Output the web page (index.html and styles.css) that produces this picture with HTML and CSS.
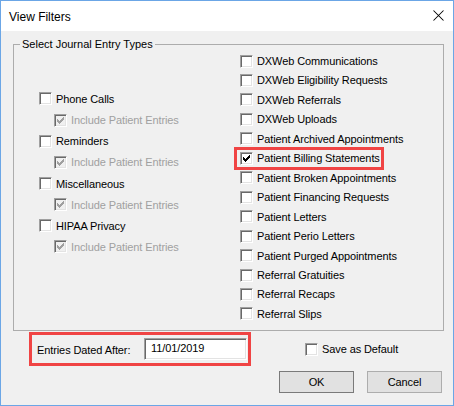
FILE: index.html
```html
<!DOCTYPE html>
<html>
<head>
<meta charset="utf-8">
<link rel="stylesheet" href="styles.css">
</head>
<body>
<div class="window">
  <div class="titlebar">
    <span class="title">View Filters</span>
    <svg class="close" width="11" height="11" viewBox="0 0 11 11"><path d="M0.5 0.5L10.5 10.5M10.5 0.5L0.5 10.5" stroke="#000" stroke-width="1.05" fill="none"/></svg>
  </div>
  <div class="content">
    <div class="group">
      <span class="legend">Select Journal Entry Types</span>
      <div class="col col-left">
        <div class="cb"><span class="box"></span><span class="lbl">Phone Calls</span></div>
        <div class="cb sub disabled"><span class="box checked"><svg width="7" height="7" viewBox="0 0 7 7"><path d="M6 0h1v1h-1zM5 1h2v1h-2zM0 2h1v1h-1zM4 2h3v1h-3zM0 3h2v1h-2zM3 3h3v1h-3zM0 4h5v1h-5zM1 5h3v1h-3zM2 6h1v1h-1z"/></svg></span><span class="lbl">Include Patient Entries</span></div>
        <div class="cb"><span class="box"></span><span class="lbl">Reminders</span></div>
        <div class="cb sub disabled"><span class="box checked"><svg width="7" height="7" viewBox="0 0 7 7"><path d="M6 0h1v1h-1zM5 1h2v1h-2zM0 2h1v1h-1zM4 2h3v1h-3zM0 3h2v1h-2zM3 3h3v1h-3zM0 4h5v1h-5zM1 5h3v1h-3zM2 6h1v1h-1z"/></svg></span><span class="lbl">Include Patient Entries</span></div>
        <div class="cb"><span class="box"></span><span class="lbl">Miscellaneous</span></div>
        <div class="cb sub disabled"><span class="box checked"><svg width="7" height="7" viewBox="0 0 7 7"><path d="M6 0h1v1h-1zM5 1h2v1h-2zM0 2h1v1h-1zM4 2h3v1h-3zM0 3h2v1h-2zM3 3h3v1h-3zM0 4h5v1h-5zM1 5h3v1h-3zM2 6h1v1h-1z"/></svg></span><span class="lbl">Include Patient Entries</span></div>
        <div class="cb"><span class="box"></span><span class="lbl">HIPAA Privacy</span></div>
        <div class="cb sub disabled"><span class="box checked"><svg width="7" height="7" viewBox="0 0 7 7"><path d="M6 0h1v1h-1zM5 1h2v1h-2zM0 2h1v1h-1zM4 2h3v1h-3zM0 3h2v1h-2zM3 3h3v1h-3zM0 4h5v1h-5zM1 5h3v1h-3zM2 6h1v1h-1z"/></svg></span><span class="lbl">Include Patient Entries</span></div>
      </div>
      <div class="col col-right">
        <div class="cb"><span class="box"></span><span class="lbl">DXWeb Communications</span></div>
        <div class="cb"><span class="box"></span><span class="lbl">DXWeb Eligibility Requests</span></div>
        <div class="cb"><span class="box"></span><span class="lbl">DXWeb Referrals</span></div>
        <div class="cb"><span class="box"></span><span class="lbl">DXWeb Uploads</span></div>
        <div class="cb"><span class="box"></span><span class="lbl">Patient Archived Appointments</span></div>
        <div class="cb highlighted"><span class="box checked"><svg width="7" height="7" viewBox="0 0 7 7"><path d="M6 0h1v1h-1zM5 1h2v1h-2zM0 2h1v1h-1zM4 2h3v1h-3zM0 3h2v1h-2zM3 3h3v1h-3zM0 4h5v1h-5zM1 5h3v1h-3zM2 6h1v1h-1z"/></svg></span><span class="lbl">Patient Billing Statements</span></div>
        <div class="cb"><span class="box"></span><span class="lbl">Patient Broken Appointments</span></div>
        <div class="cb"><span class="box"></span><span class="lbl">Patient Financing Requests</span></div>
        <div class="cb"><span class="box"></span><span class="lbl">Patient Letters</span></div>
        <div class="cb"><span class="box"></span><span class="lbl">Patient Perio Letters</span></div>
        <div class="cb"><span class="box"></span><span class="lbl">Patient Purged Appointments</span></div>
        <div class="cb"><span class="box"></span><span class="lbl">Referral Gratuities</span></div>
        <div class="cb"><span class="box"></span><span class="lbl">Referral Recaps</span></div>
        <div class="cb"><span class="box"></span><span class="lbl">Referral Slips</span></div>
      </div>
    </div>
    <div class="footer-row">
      <div class="date-box">
        <span class="date-label">Entries Dated After:</span>
        <span class="textbox">11/01/2019</span>
      </div>
      <div class="cb save"><span class="box"></span><span class="lbl">Save as Default</span></div>
    </div>
    <div class="buttons">
      <span class="btn default">OK</span>
      <span class="btn">Cancel</span>
    </div>
  </div>
</div>
</body>
</html>
```
FILE: styles.css
```css
html, body {
  margin: 0;
  padding: 0;
  background: #f0f0f0;
}
.window {
  width: 454px;
  height: 406px;
  box-sizing: border-box;
  border: 1px solid #6ba6e6;
  background: #f0f0f0;
  font-family: "Liberation Sans", Arial, sans-serif;
  font-size: 11px;
  letter-spacing: -0.1px;
  color: #000;
  display: flex;
  flex-direction: column;
}
.titlebar {
  height: 30px;
  background: #fff;
  display: flex;
  align-items: center;
  justify-content: space-between;
  padding: 0 9px 0 8px;
  flex: none;
}
.title {
  font-size: 12px;
  letter-spacing: 0;
  margin-top: 1px;
}
.close {
  display: block;
  margin-top: -1px;
}
.content {
  padding: 13px 9px 0 12px;
  display: flex;
  flex-direction: column;
}
.group {
  position: relative;
  height: 287px;
  box-sizing: border-box;
  border: 1px solid #acacac;
  display: flex;
}
.legend {
  position: absolute;
  top: -8px;
  left: 6px;
  padding: 0 2px 0 2px;
  background: #f0f0f0;
  line-height: 14px;
  letter-spacing: 0;
}
.col {
  display: flex;
  flex-direction: column;
}
.col-left {
  width: 226px;
  box-sizing: border-box;
  padding: 43.4px 0 0 25px;
}
.col-left .cb {
  height: 21.15px;
}
.col-right {
  padding-top: 6.3px;
}
.col-right .cb {
  height: 19.46px;
}
.cb {
  display: flex;
  align-items: center;
  white-space: nowrap;
  position: relative;
}
.cb.sub {
  padding-left: 15px;
}
.box {
  width: 13px;
  height: 13px;
  box-sizing: border-box;
  border: 1px solid;
  border-color: #a0a0a0 #ffffff #ffffff #a0a0a0;
  box-shadow: inset 1px 1px 0 #696969, inset -1px -1px 0 #e3e3e3;
  background: #fff;
  flex: none;
  display: flex;
  align-items: center;
  justify-content: center;
  margin-right: 4px;
}
.box svg {
  display: block;
  fill: #000;
  shape-rendering: crispEdges;
}
.disabled .box {
  background: #f0f0f0;
}
.disabled .box svg {
  fill: #a0a0a0;
}
.disabled .lbl {
  color: #a0a0a0;
}
.highlighted::after {
  content: "";
  position: absolute;
  left: -6px;
  top: -2px;
  width: 144px;
  bottom: -2px;
  border: 3px solid #f04444;
}
.footer-row {
  display: flex;
  align-items: center;
  margin-top: 1px;
}
.date-box {
  margin-left: 16px;
  width: 222px;
  height: 34px;
  box-sizing: border-box;
  border: 3px solid #f04444;
  display: flex;
  align-items: center;
  padding: 0 1px 0 5px;
  justify-content: space-between;
}
.date-label {
  margin-top: 2px;
}
.textbox {
  width: 103px;
  height: 22px;
  box-sizing: border-box;
  border: 1px solid;
  border-color: #a0a0a0 #ffffff #ffffff #a0a0a0;
  box-shadow: inset 1px 1px 0 #696969, inset -1px -1px 0 #e3e3e3;
  background: #fff;
  padding: 3px 0 0 6px;
  line-height: 13px;
  margin-top: -1px;
}
.cb.save {
  margin-left: 54px;
}
.buttons {
  display: flex;
  justify-content: flex-end;
  gap: 13px;
  margin-top: 5px;
  padding-right: 2px;
}
.btn {
  width: 75px;
  height: 22px;
  box-sizing: border-box;
  border: 1px solid #adadad;
  background: #e1e1e1;
  display: flex;
  align-items: center;
  justify-content: center;
}
.btn.default {
  border-color: #7a7a7a;
}
```
